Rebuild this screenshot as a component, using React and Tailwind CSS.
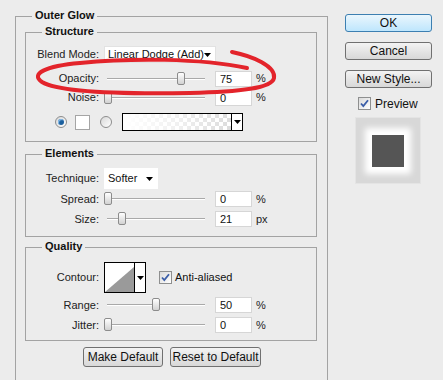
import React from "react";

const Caret = () => (
  <svg width="7" height="4" viewBox="0 0 7 4" className="block">
    <path d="M0 0h7L3.5 4z" fill="#000" />
  </svg>
);

const Group = ({ title, className, children }) => (
  <div className={`relative border border-[#a3a3a3] ${className}`}>
    <span className="absolute -top-[8px] left-[16px] px-[3px] bg-[#ececec] text-[11px] leading-[13px] font-bold text-[#111]">
      {title}
    </span>
    {children}
  </div>
);

const Label = ({ children }) => (
  <div className="w-[73px] shrink-0 text-right text-[11px] text-[#222]">{children}</div>
);

const Slider = ({ pos }) => (
  <div className="relative w-[103px] h-[14px] shrink-0">
    <div className="absolute left-[3px] right-[2px] top-[6px] h-[2px] border-t border-[#a9a9a9] border-b border-b-white" />
    <div
      className="absolute top-0 w-[8px] h-[13px] rounded-[2px] border border-[#8c8c8c] bg-gradient-to-b from-white to-[#d2d2d2]"
      style={{ left: pos }}
    />
  </div>
);

const NumField = ({ value, unit }) => (
  <>
    <div className="ml-[8px] w-[37px] h-[16px] bg-white border border-[#d6d6d6] text-[11px] leading-[14px] pl-[4px] text-[#111]">
      {value}
    </div>
    <span className="ml-[4px] text-[11px] text-[#222]">{unit}</span>
  </>
);

const SliderRow = ({ label, pos, value, unit = "%", className = "" }) => (
  <div className={`flex items-center h-[16px] ${className}`}>
    <Label>{label}</Label>
    <div className="ml-[5px] flex items-center">
      <Slider pos={pos} />
      <NumField value={value} unit={unit} />
    </div>
  </div>
);

const Radio = ({ on }) => (
  <div className="w-[12px] h-[12px] rounded-full border border-[#8d8d8d] bg-gradient-to-br from-[#d8d8d8] to-white flex items-center justify-center shrink-0">
    {on && <div className="w-[6px] h-[6px] rounded-full bg-[#1b5f9e] shadow-[inset_1px_1px_1px_#8fc3ef]" />}
  </div>
);

const Check = () => (
  <div className="w-[13px] h-[13px] border border-[#8e8f8f] bg-gradient-to-br from-[#dadada] to-white flex items-center justify-center shrink-0">
    <svg width="9" height="9" viewBox="0 0 9 9">
      <path d="M1 4.5l2.3 2.6L8 1.2" fill="none" stroke="#3b5ea8" strokeWidth="1.8" />
    </svg>
  </div>
);

const Button = ({ children, primary, className = "" }) => (
  <div
    className={`flex items-center justify-center rounded-[3px] border text-[12px] text-[#111] ${
      primary
        ? "border-[#3c7fb1] bg-gradient-to-b from-[#eaf6fd] to-[#bee6fd]"
        : "border-[#707070] bg-gradient-to-b from-[#f3f3f3] to-[#d8d8d8]"
    } ${className}`}
  >
    {children}
  </div>
);

export default function App() {
  return (
    <div className="relative w-[443px] h-[380px] overflow-hidden bg-[#ececec] font-['Liberation_Sans',Arial,sans-serif] flex">
      {/* left: outer glow panel */}
      <div className="ml-[15px] mt-[16px]">
        <Group title="Outer Glow" className="w-[313px] h-[400px] pl-[9px] pr-[10px] pt-[15px]">
          <Group title="Structure" className="h-[110px] pt-[13px]">
            <div className="flex items-center h-[17px]">
              <Label>Blend Mode:</Label>
              <div className="ml-[5px] w-[112px] h-[17px] bg-white border border-[#e2e2e2] flex items-center justify-between pl-[3px] pr-[4px] text-[11px] text-[#111]">
                <span>Linear Dodge (Add)</span>
                <Caret />
              </div>
            </div>
            <SliderRow label="Opacity:" pos={73} value="75" className="mt-[7px] h-[17px]" />
            <SliderRow label="Noise:" pos={0} value="0" className="mt-[2px] h-[17px]" />
            <div className="mt-[7px] flex items-center h-[18px] pl-[29px]">
              <Radio on />
              <div className="ml-[8px] w-[15px] h-[15px] bg-white border border-[#a5a5a5]" />
              <div className="ml-[10px]">
                <Radio />
              </div>
              <div className="ml-[10px] w-[121px] h-[18px] border border-black flex">
                <div className="relative flex-1 bg-[repeating-conic-gradient(#dcdcdc_0_25%,#ffffff_0_50%)] bg-[length:8px_8px]">
                  <div className="absolute inset-0 bg-gradient-to-r from-white via-white/60 to-white/0" />
                </div>
                <div className="w-[11px] border-l border-black bg-white flex items-center justify-center">
                  <Caret />
                </div>
              </div>
            </div>
          </Group>

          <Group title="Elements" className="mt-[12px] h-[83px] pt-[13px]">
            <div className="flex items-center h-[21px]">
              <Label>Technique:</Label>
              <div className="ml-[5px] w-[54px] h-[21px] bg-white flex items-center justify-between pl-[4px] pr-[5px] text-[11px] text-[#111]">
                <span>Softer</span>
                <Caret />
              </div>
            </div>
            <SliderRow label="Spread:" pos={0} value="0" className="mt-[2px]" />
            <SliderRow label="Size:" pos={14} value="21" unit="px" className="mt-[4px]" />
          </Group>

          <Group title="Quality" className="mt-[10px] h-[94px] pt-[14px]">
            <div className="flex items-center h-[31px]">
              <Label>Contour:</Label>
              <div className="ml-[5px] w-[42px] h-[31px] border border-black flex">
                <svg width="29" height="29" viewBox="0 0 29 29" className="block bg-white">
                  <path d="M0 29L29 4V29z" fill="#9a9a9a" />
                </svg>
                <div className="w-[11px] border-l border-black bg-white flex items-center justify-center">
                  <Caret />
                </div>
              </div>
              <div className="ml-[13px]">
                <Check />
              </div>
              <span className="ml-[3px] text-[11px] text-[#111]">Anti-aliased</span>
            </div>
            <SliderRow label="Range:" pos={48} value="50" className="mt-[4px]" />
            <SliderRow label="Jitter:" pos={0} value="0" className="mt-[4px]" />
          </Group>

          <div className="mt-[6px] flex gap-[7px] pl-[58px]">
            <Button className="w-[80px] h-[20px] text-[11px]">Make Default</Button>
            <Button className="w-[91px] h-[20px] text-[11px]">Reset to Default</Button>
          </div>
        </Group>
      </div>

      {/* right: buttons and preview */}
      <div className="ml-[17px] mt-[14px] w-[87px] flex flex-col">
        <Button primary className="h-[18px]">OK</Button>
        <Button className="mt-[10px] h-[18px]">Cancel</Button>
        <Button className="mt-[10px] h-[18px]">New Style...</Button>
        <div className="mt-[9px] flex items-center h-[13px] pl-[13px]">
          <Check />
          <span className="ml-[4px] text-[12px] text-[#111]">Preview</span>
        </div>
        <div className="mt-[7px] ml-[10px] w-[66px] h-[67px] bg-[#d8d8d8] border border-[#e4e4e4] flex items-center justify-center">
          <div className="w-[32px] h-[32px] bg-[#555555] shadow-[0_0_6px_7px_#ffffff]" />
        </div>
      </div>

      {/* red annotation ring drawn over the dialog */}
      <svg className="absolute inset-0 pointer-events-none" width="443" height="380" viewBox="0 0 443 380">
        <path
          d="M232 52C252 56 276 66 274 78C272 88 240 92 190 93C130 94 60 93 42 82C30 74 45 66 80 63C130 58 200 58 247 68"
          fill="none"
          stroke="#e3242b"
          strokeWidth="4"
          strokeLinecap="round"
        />
      </svg>
    </div>
  );
}
